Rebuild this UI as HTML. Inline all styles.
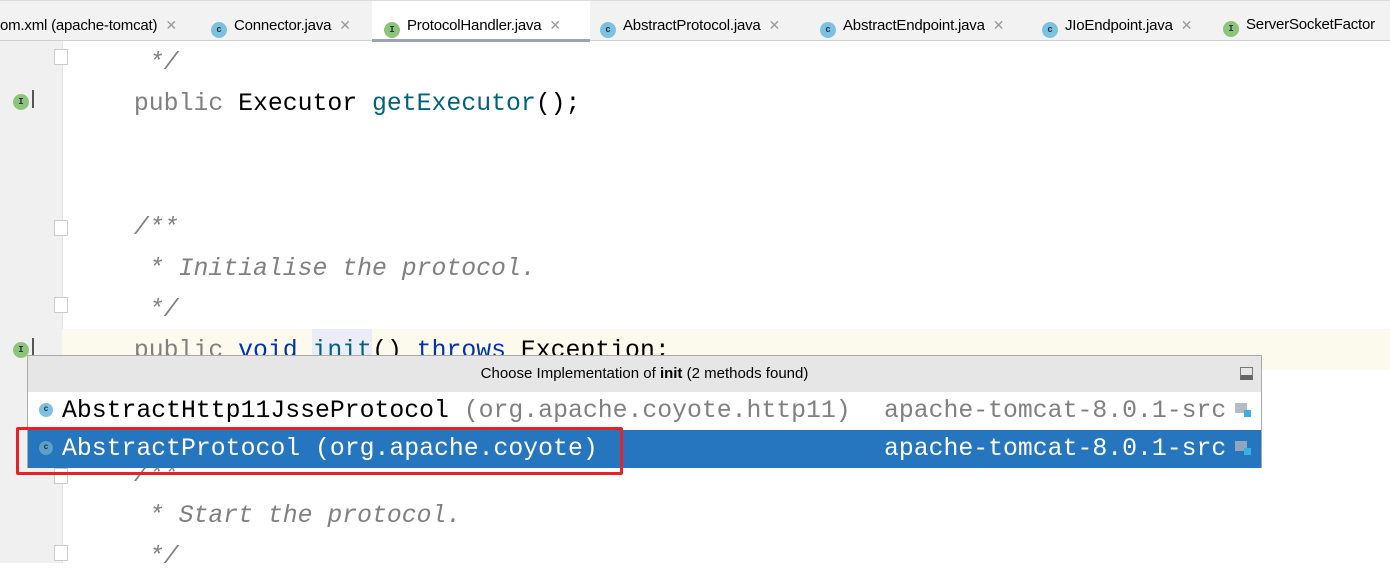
<!DOCTYPE html>
<html><head><style>
body{margin:0;width:1390px;height:563px;overflow:hidden;background:#fff;position:relative;font-family:"Liberation Sans",sans-serif}
.tabs{position:absolute;left:0;top:0;width:1390px;height:41px;background:#f2f2f2;border-top:1px solid #dcdcdc;border-bottom:1px solid #d0d0d0;box-sizing:border-box}
.tab{position:absolute;top:5px;height:35px;line-height:38px;font-size:15px;color:#000;white-space:nowrap;letter-spacing:-0.2px}
.tab .x{color:#999;margin-left:8px;font-size:14px}
.ic{display:inline-block;width:16px;height:16px;border-radius:50%;vertical-align:-2px;margin-right:7px;font-size:9px;line-height:16px;text-align:center;color:#234;font-weight:bold;font-family:"Liberation Mono",monospace}
.c{background:#7cc2e0}.i{background:#8ec47a}
.gut{position:absolute;left:0;top:41px;width:62px;height:522px;background:#f0f0f0;border-right:1px solid #e2e2e2}
.code{position:absolute;left:0;font-family:"Liberation Mono",monospace;font-size:24.8px;white-space:pre;line-height:41.2px}
.cm{color:#808080;font-style:italic}.kw{color:#0033b3}.mt{color:#00627a}.gr{color:#808080}
.fold{position:absolute;left:54px;width:14px;height:16px;border:1px solid #ccc;background:#fff;box-sizing:border-box}
.hl{position:absolute;left:62px;top:329px;width:1328px;height:41px;background:#fcfaed}
.pop{position:absolute;left:27px;top:355px;width:1235px;height:113px;border:1px solid #aaa;background:#fff;box-sizing:border-box}
.ph{height:36px;background:#e6e6e6;text-align:center;line-height:36px;font-size:15px;color:#000}
.row{position:absolute;left:0;width:1233px;height:38px;line-height:38px;font-family:"Liberation Mono",monospace;font-size:24.8px;white-space:pre}
</style></head><body>
<div class="tabs">
<div class="tab" style="left:0">om.xml (apache-tomcat)<span class="x">✕</span></div>
<div class="tab" style="left:211px"><span class="ic c">c</span>Connector.java<span class="x">✕</span></div>
<div class="tab" style="left:372px;top:0;padding-top:5px;padding-left:12px;width:206px;background:#fff;height:33px;border-bottom:3px solid #9aa4b4"><span class="ic i">I</span>ProtocolHandler.java<span class="x">✕</span></div>
<div class="tab" style="left:600px"><span class="ic c">c</span>AbstractProtocol.java<span class="x">✕</span></div>
<div class="tab" style="left:820px"><span class="ic c">c</span>AbstractEndpoint.java<span class="x">✕</span></div>
<div class="tab" style="left:1042px"><span class="ic c">c</span>JIoEndpoint.java<span class="x">✕</span></div>
<div class="tab" style="left:1223px"><span class="ic i">I</span>ServerSocketFactor</div>
</div>
<div class="gut"></div>
<div class="hl"></div>
<div style="position:absolute;left:312px;top:329px;width:60px;height:41px;background:#ecebf8"></div>
<div class="fold" style="top:49px"></div><div class="fold" style="top:220px"></div><div class="fold" style="top:297px"></div><div class="fold" style="top:468px"></div><div class="fold" style="top:545px"></div>
<div class="ic i" style="position:absolute;left:13px;top:94px">I</div><div style="position:absolute;left:32px;top:90px;width:2px;height:18px;background:#555"></div>
<div class="ic i" style="position:absolute;left:13px;top:342px">I</div><div style="position:absolute;left:32px;top:338px;width:2px;height:18px;background:#555"></div>
<div class="code" style="top:43px"><span class="cm">          */</span>
<span class="gr">         public</span> Executor <span class="mt">getExecutor</span>();


<span class="cm">         /**</span>
<span class="cm">          * Initialise the protocol.</span>
<span class="cm">          */</span>
<span class="gr">         public</span> <span class="kw">void</span> <span class="mt">init</span>() <span class="kw">throws</span> Exception;


<span class="cm">         /**</span>
<span class="cm">          * Start the protocol.</span>
<span class="cm">          */</span></div>
<div class="pop">
<div class="ph">Choose Implementation of <b>init</b> (2 methods found)</div>
<div style="position:absolute;right:8px;top:11px;width:13px;height:13px;border:1px solid #777;box-sizing:border-box;border-bottom:5px solid #666"></div>
<div class="row" style="top:36px"><span class="ic c" style="position:absolute;left:11px;top:11px;width:14px;height:14px;line-height:14px;font-size:8px">c</span><span style="position:absolute;left:34px">AbstractHttp11JsseProtocol <span class="gr">(org.apache.coyote.http11)</span></span><span class="gr" style="position:absolute;left:856px">apache-tomcat-8.0.1-src</span><span style="position:absolute;left:1207px;top:11px;width:12px;height:10px;background:#b3bcc4"></span><span style="position:absolute;left:1216px;top:18px;width:7px;height:7px;background:#3ab0e0"></span></div>
<div class="row" style="top:74px;background:#2675bf;color:#fff"><span class="ic c" style="position:absolute;left:11px;top:11px;width:14px;height:14px;line-height:14px;font-size:8px;background:#5aa0c8">c</span><span style="position:absolute;left:34px">AbstractProtocol (org.apache.coyote)</span><span style="position:absolute;left:856px">apache-tomcat-8.0.1-src</span><span style="position:absolute;left:1207px;top:11px;width:12px;height:10px;background:#8fa6bd"></span><span style="position:absolute;left:1216px;top:18px;width:7px;height:7px;background:#3ab0e0"></span></div>
</div>
<div style="position:absolute;left:16px;top:427px;width:607px;height:48px;border:3px solid #e8202a;border-radius:2px;box-sizing:border-box"></div>
</body></html>
